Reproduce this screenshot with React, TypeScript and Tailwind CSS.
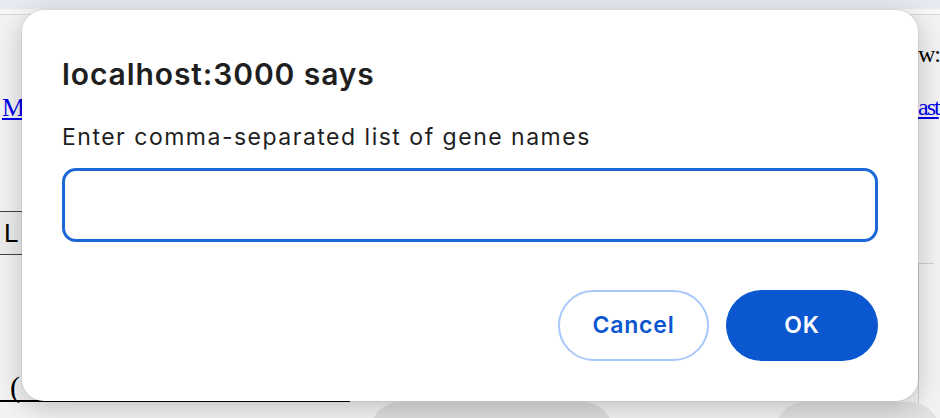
import { useState } from 'react'

export default function App() {
  const [genes, setGenes] = useState('')

  return (
    <div className="relative w-[940px] h-[418px] overflow-hidden bg-[#f3f3f3] font-['Liberation_Serif',serif]">
      {/* page behind the prompt */}
      <div className="h-[9px] bg-[#e6ebf2]" />
      <div className="h-[6px] bg-[#f7f7f7] border-b border-[#dcdcdc]" />
      <div className="flex justify-end h-[72px] pt-[27px] text-[24px] leading-none text-black">
        <span className="w-[22px] tracking-[-1px]">w:</span>
      </div>
      <div className="flex justify-between h-[40px] pt-[8px] text-[26px] leading-none">
        <a className="text-[#0000ee] underline pl-[2px]">M</a>
        <a className="text-[#0000ee] underline w-[22px] text-[24px] tracking-[-2px]">ast</a>
      </div>
      <div className="h-[84px]" />
      <div className="flex h-[44px] w-[30px] items-center border-y border-[#444] bg-[#ececec] pl-[4px] font-['Liberation_Sans',sans-serif] text-[26px] text-black">
        L
      </div>
      <div className="flex justify-end h-[100px]">
        <div className="mt-[8px] w-[16px] h-[160px] border-l border-t border-[#d0d0d0] bg-[#f4f4f4] mr-[6px]" />
      </div>
      <div className="flex items-end h-[47px]">
        <div className="w-[350px] h-[30px] border-b-2 border-black text-[30px] leading-none pl-[10px]">(</div>
      </div>
      <div className="flex gap-[20px] pl-[370px]">
        <div className="w-[250px] h-[30px] rounded-t-[30px] bg-[#dedede]" />
        <div className="w-[125px] h-[30px]" />
        <div className="w-[170px] h-[30px] rounded-t-[30px] bg-[#e2e2e2]" />
      </div>

      {/* prompt dialog on top */}
      <div className="absolute left-[22px] top-[10px] w-[896px] h-[391px] rounded-[22px] bg-white shadow-[0_6px_28px_rgba(0,0,0,0.22),0_0_0_1px_rgba(0,0,0,0.06)] px-[40px] pt-[46px] pb-[40px] flex flex-col font-['Inter',sans-serif]">
        <h2 className="text-[30px] leading-[36px] font-semibold text-[#1f1f1f] tracking-[0.9px]">
          localhost:3000 says
        </h2>
        <p className="mt-[31px] text-[23px] leading-[28px] text-[#1f1f1f] tracking-[1.5px]">
          Enter comma-separated list of gene names
        </p>
        <input
          autoFocus
          value={genes}
          onChange={(e) => setGenes(e.target.value)}
          className="mt-[17px] h-[74px] w-full rounded-[14px] border-[3px] border-[#1b68d6] outline-none px-4 text-[20px]"
        />
        <div className="mt-auto flex justify-end gap-[17px]">
          <button className="w-[151px] h-[71px] rounded-full border-2 border-[#a8c7fa] bg-white text-[#0b57d0] text-[23px] font-semibold tracking-[0.8px]">
            Cancel
          </button>
          <button className="w-[152px] h-[71px] rounded-full bg-[#0b57d0] text-white text-[23px] font-semibold tracking-[0.8px]">
            OK
          </button>
        </div>
      </div>
    </div>
  )
}
